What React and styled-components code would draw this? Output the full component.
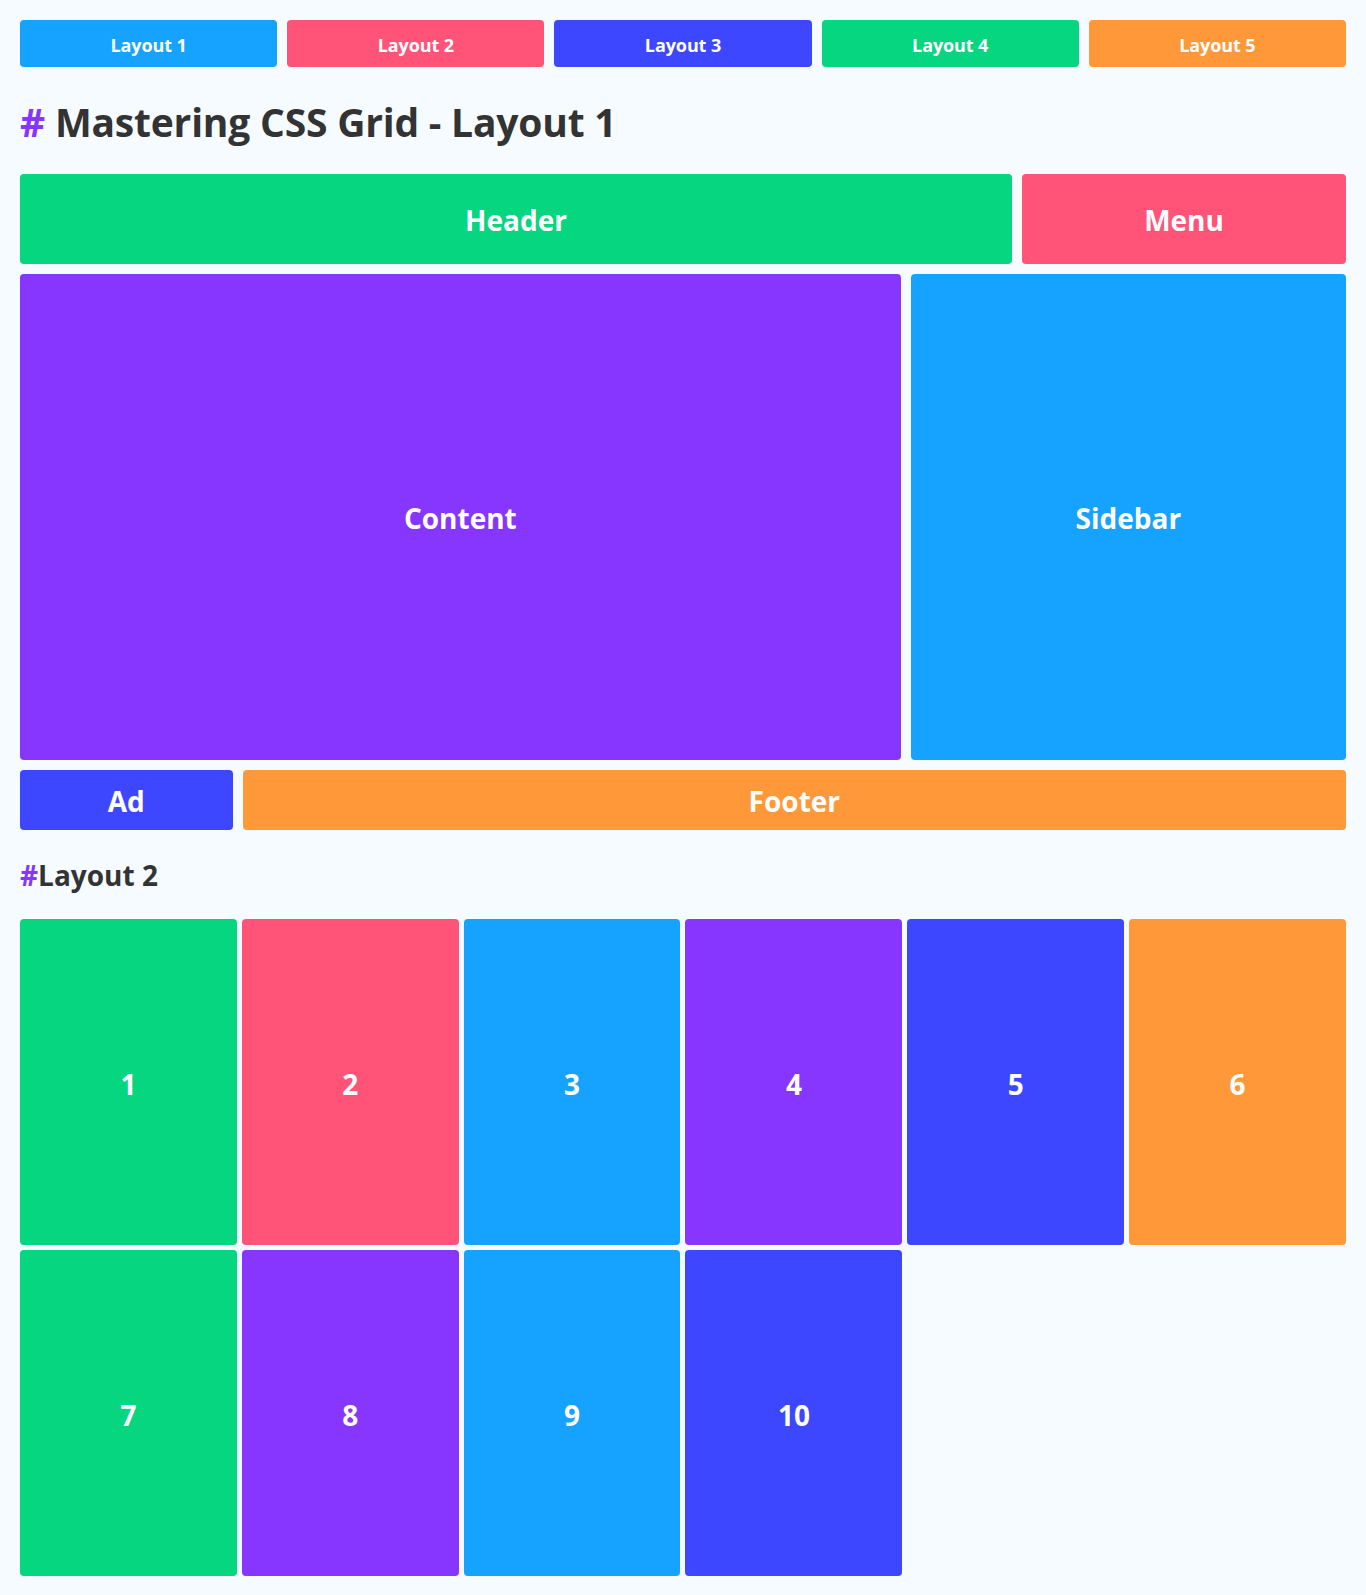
import React, { useState } from 'react';
import styled, { createGlobalStyle } from 'styled-components';

const colors = {
	blue: '#16a3ff',
	pink: '#ff5478',
	indigo: '#3d47ff',
	green: '#06d67f',
	orange: '#ff9838',
	purple: '#8636ff',
};

const layouts = [
	{ label: 'Layout 1', color: colors.blue },
	{ label: 'Layout 2', color: colors.pink },
	{ label: 'Layout 3', color: colors.indigo },
	{ label: 'Layout 4', color: colors.green },
	{ label: 'Layout 5', color: colors.orange },
];

const areas = [
	{ name: 'Header', area: 'header', color: colors.green },
	{ name: 'Menu', area: 'menu', color: colors.pink },
	{ name: 'Content', area: 'content', color: colors.purple },
	{ name: 'Sidebar', area: 'sidebar', color: colors.blue },
	{ name: 'Ad', area: 'ad', color: colors.indigo },
	{ name: 'Footer', area: 'footer', color: colors.orange },
];

const tiles = [
	colors.green,
	colors.pink,
	colors.blue,
	colors.purple,
	colors.indigo,
	colors.orange,
	colors.green,
	colors.purple,
	colors.blue,
	colors.indigo,
];

const GlobalStyle = createGlobalStyle`
	* {
		box-sizing: border-box;
	}

	body {
		margin: 0;
		background: #f5fbff;
		color: #333;
		font-family: 'Open Sans', 'Noto Sans', sans-serif;
	}
`;

const Page = styled.div`
	padding: 20px;
`;

const Tabs = styled.div`
	display: grid;
	grid-template-columns: repeat(5, 1fr);
	gap: 10px;
`;

const Tab = styled.button`
	height: 47px;
	padding: 2px 0 0;
	border: none;
	border-radius: 4px;
	background: ${({ $color }) => $color};
	color: #fff;
	font-family: inherit;
	font-size: 18px;
	font-weight: 700;
	letter-spacing: -0.1px;
	cursor: pointer;
`;

const Title = styled.h1`
	margin: 27px 0 24px;
	font-size: 39px;
	line-height: 56px;
	font-weight: 700;
	letter-spacing: -0.2px;
`;

const Hash = styled.span`
	color: ${colors.purple};
`;

const AreaGrid = styled.div`
	display: grid;
	grid-template-columns: repeat(12, 1fr);
	grid-template-rows: 90px 486px 60px;
	gap: 10px;
	grid-template-areas:
		'header header header header header header header header header menu menu menu'
		'content content content content content content content content sidebar sidebar sidebar sidebar'
		'ad ad footer footer footer footer footer footer footer footer footer footer';
`;

const Area = styled.div`
	grid-area: ${({ $area }) => $area};
	display: flex;
	align-items: center;
	justify-content: center;
	padding-top: 2px;
	border-radius: 4px;
	background: ${({ $color }) => $color};
	color: #fff;
	font-size: 28px;
	font-weight: 700;
`;

const SubTitle = styled.h2`
	margin: 24px 0 23px;
	font-size: 28px;
	line-height: 42px;
	font-weight: 700;
`;

const TileGrid = styled.div`
	display: grid;
	grid-template-columns: repeat(6, 1fr);
	grid-auto-rows: 326px;
	gap: 5px;
`;

const Tile = styled.div`
	display: flex;
	align-items: center;
	justify-content: center;
	padding-top: 3px;
	border-radius: 4px;
	background: ${({ $color }) => $color};
	color: #fff;
	font-size: 28px;
	font-weight: 700;
`;

const App = () => {
	const [active, setActive] = useState(0);

	return (
		<Page>
			<GlobalStyle />
			<Tabs>
				{layouts.map((l, i) => (
					<Tab key={l.label} $color={l.color} onClick={() => setActive(i)}>
						{l.label}
					</Tab>
				))}
			</Tabs>

			<Title>
				<Hash>#</Hash> Mastering CSS Grid - {layouts[active].label}
			</Title>

			<AreaGrid>
				{areas.map(a => (
					<Area key={a.area} $area={a.area} $color={a.color}>
						{a.name}
					</Area>
				))}
			</AreaGrid>

			<SubTitle>
				<Hash>#</Hash>Layout 2
			</SubTitle>

			<TileGrid>
				{tiles.map((c, i) => (
					<Tile key={i} $color={c}>
						{i + 1}
					</Tile>
				))}
			</TileGrid>
		</Page>
	);
};

export default App;
